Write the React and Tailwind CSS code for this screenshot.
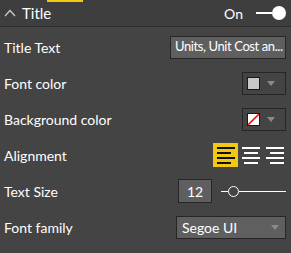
import React from "react";

const font = { fontFamily: '"Segoe UI", Lato, "Noto Sans", sans-serif' };

const Caret = () => (
  <svg width="8" height="5" viewBox="0 0 8 5" className="shrink-0">
    <path d="M0 0h8L4 5z" fill="#8a8a8a" />
  </svg>
);

const AlignIcon = ({ kind, active }) => {
  const color = active ? "#111111" : "#ffffff";
  const rows = [
    [true, 0],
    [false, 1],
    [true, 2],
    [false, 3],
  ];
  return (
    <div
      className={
        active
          ? "w-[25px] h-[24px] bg-[#f2c811] flex items-center justify-center"
          : "w-[22px] h-[24px] flex items-center justify-center"
      }
    >
      <svg width="18" height="17" viewBox="0 0 18 17">
        {rows.map(([long, i]) => {
          const w = long ? 18 : 14;
          let x = 0;
          if (kind === "center") x = long ? 0 : 2;
          if (kind === "right") x = long ? 0 : 4;
          return (
            <rect key={i} x={x} y={i * 5} width={w} height="2" fill={color} />
          );
        })}
      </svg>
    </div>
  );
};

const Row = ({ label, children }) => (
  <div className="h-9 flex items-center justify-between pl-1 pr-[5px]">
    <span className="text-[14px] text-white">{label}</span>
    {children}
  </div>
);

export default function App() {
  return (
    <div
      className="w-[291px] h-[253px] bg-[#444444] overflow-hidden"
      style={font}
    >
      <div className="relative h-[27px] bg-[#3e3e3e] border-b border-[#2e2e2e] flex items-center justify-between pl-1 pr-[5px]">
        <div className="absolute left-[47px] top-0 w-[36px] h-[2px] bg-[#f2c811]" />
        <div className="flex items-center gap-[6px]">
          <svg width="12" height="8" viewBox="0 0 12 8">
            <path d="M1 7l5-5.5L11 7" fill="none" stroke="#cfcfcf" strokeWidth="1.2" />
          </svg>
          <span className="text-[15px] text-white">Title</span>
        </div>
        <div className="flex items-center">
          <span className="text-[14px] text-white mr-[13px]">On</span>
          <div className="w-[16px] h-[2px] bg-white" />
          <div className="w-[14px] h-[14px] rounded-full bg-white" />
        </div>
      </div>
      <div className="pt-[2px]">
        <Row label="Title Text">
          <div className="w-[116px] h-[23px] bg-[#5f5f5f] border border-[#262626] flex items-center pl-[4px] text-[13px] tracking-[-0.4px] text-white whitespace-nowrap overflow-hidden">
            Units, Unit Cost an...
          </div>
        </Row>
        <Row label="Font color">
          <div className="w-[44px] h-[23px] border border-[#262626] flex items-center gap-[7px] pl-[4px]">
            <div className="w-[13px] h-[13px] bg-[#c8c8c8] border border-[#1a1a1a]" />
            <Caret />
          </div>
        </Row>
        <Row label="Background color">
          <div className="w-[44px] h-[23px] border border-[#262626] flex items-center gap-[7px] pl-[4px]">
            <div className="w-[13px] h-[13px] bg-white border border-[#1a1a1a] overflow-hidden">
              <svg width="11" height="11" viewBox="0 0 11 11" className="block">
                <path d="M0 11L11 0" stroke="#ff1010" strokeWidth="1.6" />
              </svg>
            </div>
            <Caret />
          </div>
        </Row>
        <Row label="Alignment">
          <div className="flex items-center gap-[2px]">
            <AlignIcon kind="left" active />
            <AlignIcon kind="center" />
            <AlignIcon kind="right" />
          </div>
        </Row>
        <Row label="Text Size">
          <div className="flex items-center">
            <div className="w-[34px] h-[24px] bg-[#5f5f5f] border border-[#262626] flex items-center justify-center text-[14px] text-white">
              12
            </div>
            <div className="ml-[9px] flex items-center w-[65px]">
              <div className="w-[7px] h-px bg-white" />
              <div className="w-[11px] h-[11px] rounded-full border border-white" />
              <div className="flex-1 h-px bg-white" />
            </div>
          </div>
        </Row>
        <Row label="Font family">
          <div className="w-[110px] h-[23px] bg-[#5f5f5f] border border-[#262626] flex items-center justify-between pl-[5px] pr-[6px] text-[14px] text-white">
            <span>Segoe UI</span>
            <Caret />
          </div>
        </Row>
      </div>
    </div>
  );
}
